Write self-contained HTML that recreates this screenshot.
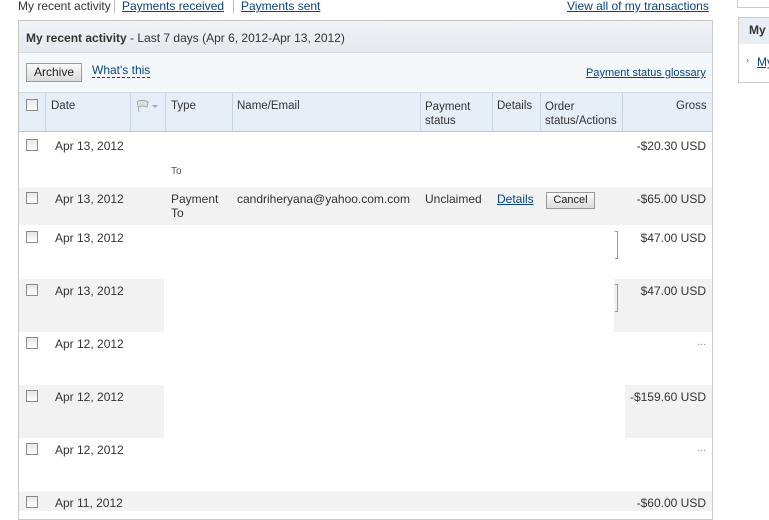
<!DOCTYPE html>
<html><head><style>
*{margin:0;padding:0;box-sizing:border-box}
body{width:769px;height:511px;overflow:hidden;background:#fff;font-family:"Liberation Sans",Arial,sans-serif;font-size:12px;color:#333;position:relative}
.a{position:absolute;white-space:nowrap}
a,.lk{color:#084482;text-decoration:underline}
.cb{position:absolute;width:12px;height:12px;border:1px solid #8a8a8a;background:linear-gradient(#e6e6e6,#fff)}
.g{position:absolute;background:#f2f2f2}
.vl{position:absolute;width:1px;background:#c9d3de;top:93px;height:38px}
</style></head><body>
<div class="a" style="left:18px;top:-1px;font-size:12px;color:#333">My recent activity</div>
<div class="a" style="left:114px;top:0;width:1px;height:13px;background:#bbb"></div>
<div class="a lk" style="left:122px;top:-1px">Payments received</div>
<div class="a" style="left:233px;top:0;width:1px;height:13px;background:#bbb"></div>
<div class="a lk" style="left:241px;top:-1px">Payments sent</div>
<div class="a lk" style="left:567px;top:-1px">View all of my transactions</div>

<div class="a" style="left:737px;top:-2px;width:40px;height:10px;border:1px solid #ccc"></div>
<div class="a" style="left:738px;top:17px;width:40px;height:66px;border:1px solid #ccc"></div>
<div class="a" style="left:739px;top:18px;width:40px;height:26px;background:#e8eef4"></div>
<div class="a" style="left:749px;top:23px;font-weight:bold;color:#333">My a</div>
<div class="a" style="left:746px;top:55px;font-size:9px;color:#666">›</div>
<div class="a lk" style="left:757px;top:55px">My</div>

<div class="a" style="left:18px;top:20px;width:695px;height:500px;border:1px solid #c8c8c8"></div>
<div class="a" style="left:19px;top:21px;width:693px;height:32px;background:linear-gradient(#f1f4f7,#e3e9ef);border-bottom:1px solid #d2d9e0"></div>
<div class="a" style="left:26px;top:31px;color:#333"><b>My recent activity</b> - Last 7 days (Apr 6, 2012-Apr 13, 2012)</div>
<div class="a" style="left:19px;top:54px;width:693px;height:37px;background:#f5f8fb"></div>
<div class="a" style="left:26px;top:63px;width:56px;height:19px;border:1px solid #999;background:linear-gradient(#fafafa,#dcdcdc);text-align:center;line-height:17px;color:#222">Archive</div>
<div class="a" style="left:92px;top:64px;color:#084482;border-bottom:1px dashed #084482;line-height:13px">What's this</div>
<div class="a lk" style="left:586px;top:67px;font-size:11px">Payment status glossary</div>

<div class="a" style="left:19px;top:92px;width:693px;height:40px;background:#e6eef7;border-top:1px solid #cfd6de;border-bottom:1px solid #b9c3cd"></div>
<div class="vl" style="left:45px"></div><div class="vl" style="left:130px"></div><div class="vl" style="left:165px"></div><div class="vl" style="left:232px"></div><div class="vl" style="left:420px"></div><div class="vl" style="left:492px"></div><div class="vl" style="left:540px"></div><div class="vl" style="left:622px"></div>
<div class="cb" style="left:26px;top:99px"></div>
<div class="a" style="left:51px;top:100px;font-size:11.5px">Date</div>
<svg class="a" style="left:134px;top:99px" width="28" height="14"><path d="M3 2 L5 13 M4 2 Q9 0 14 3 L13 8 Q9 6 5 8" stroke="#aaa" fill="#ddd"/><path d="M18 6 L24 6 L21 9Z" fill="#aaa"/></svg>
<div class="a" style="left:171px;top:100px;font-size:11.5px">Type</div>
<div class="a" style="left:237px;top:100px;font-size:11.5px">Name/Email</div>
<div class="a" style="left:425px;top:100px;font-size:11.5px;line-height:14px">Payment<br>status</div>
<div class="a" style="left:497px;top:100px;font-size:11.5px">Details</div>
<div class="a" style="left:545px;top:100px;font-size:11.5px;line-height:14px">Order<br>status/Actions</div>
<div class="a" style="left:676px;top:100px;font-size:11.5px">Gross</div>

<div class="g" style="left:19px;top:187px;width:693px;height:38px"></div>
<div class="g" style="left:19px;top:279px;width:145px;height:53px"></div>
<div class="g" style="left:614px;top:279px;width:98px;height:53px"></div>
<div class="g" style="left:19px;top:385px;width:145px;height:53px"></div>
<div class="g" style="left:625px;top:385px;width:87px;height:53px"></div>
<div class="g" style="left:19px;top:491px;width:693px;height:20px"></div>

<div class="cb" style="left:26px;top:139px"></div><div class="a" style="left:55px;top:139px">Apr 13, 2012</div><div class="a" style="right:63px;top:139px">-$20.30 USD</div>
<div class="a" style="left:171px;top:166px;font-size:10px;color:#555">To</div>
<div class="cb" style="left:26px;top:192px"></div><div class="a" style="left:55px;top:192px">Apr 13, 2012</div>
<div class="a" style="left:171px;top:192px;line-height:14px">Payment<br>To</div>
<div class="a" style="left:237px;top:192px">candriheryana@yahoo.com.com</div>
<div class="a" style="left:425px;top:192px">Unclaimed</div>
<div class="a lk" style="left:497px;top:192px">Details</div>
<div class="a" style="left:546px;top:192px;width:49px;height:17px;border:1px solid #999;background:linear-gradient(#fafafa,#dcdcdc);text-align:center;line-height:15px;font-size:11px;color:#222">Cancel</div>
<div class="a" style="right:63px;top:192px">-$65.00 USD</div>
<div class="cb" style="left:26px;top:231px"></div><div class="a" style="left:55px;top:231px">Apr 13, 2012</div><div class="a" style="right:63px;top:231px">$47.00 USD</div>
<div class="a" style="left:615px;top:231px;width:3px;height:28px;border:1px solid #999;border-left:none"></div>
<div class="cb" style="left:26px;top:284px"></div><div class="a" style="left:55px;top:284px">Apr 13, 2012</div><div class="a" style="right:63px;top:284px">$47.00 USD</div>
<div class="a" style="left:615px;top:284px;width:3px;height:28px;border:1px solid #999;border-left:none"></div>
<div class="cb" style="left:26px;top:337px"></div><div class="a" style="left:55px;top:337px">Apr 12, 2012</div><div class="a" style="right:63px;top:337px;font-size:10px;color:#777">...</div>
<div class="cb" style="left:26px;top:390px"></div><div class="a" style="left:55px;top:390px">Apr 12, 2012</div><div class="a" style="right:63px;top:390px">-$159.60 USD</div>
<div class="cb" style="left:26px;top:443px"></div><div class="a" style="left:55px;top:443px">Apr 12, 2012</div><div class="a" style="right:63px;top:443px;font-size:10px;color:#777">...</div>
<div class="cb" style="left:26px;top:496px"></div><div class="a" style="left:55px;top:496px">Apr 11, 2012</div><div class="a" style="right:63px;top:496px">-$60.00 USD</div>
</body></html>
